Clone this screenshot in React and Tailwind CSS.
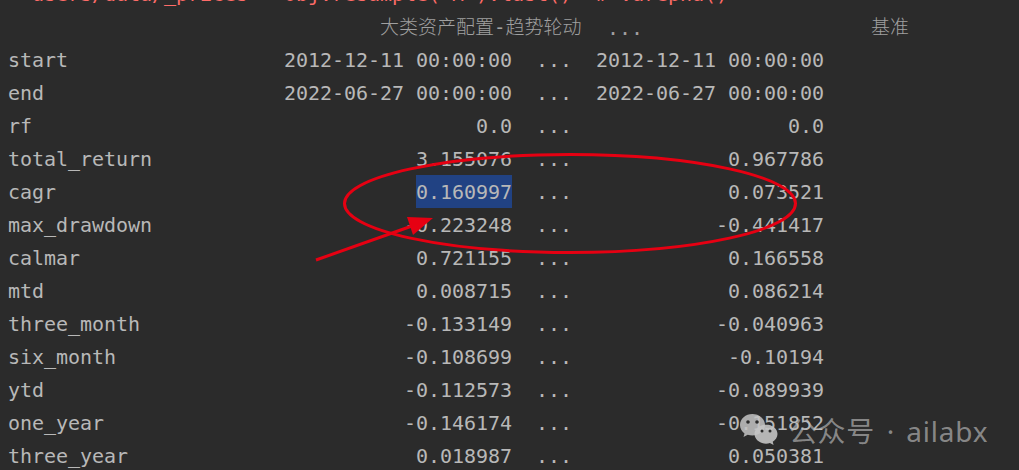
// Console output of a backtest stats table, with red annotations on top
const ROWS = [
  ['start', '2012-12-11 00:00:00', '2012-12-11 00:00:00'],
  ['end', '2022-06-27 00:00:00', '2022-06-27 00:00:00'],
  ['rf', '0.0', '0.0'],
  ['total_return', '3.155076', '0.967786'],
  ['cagr', '0.160997', '0.073521'],
  ['max_drawdown', '-0.223248', '-0.441417'],
  ['calmar', '0.721155', '0.166558'],
  ['mtd', '0.008715', '0.086214'],
  ['three_month', '-0.133149', '-0.040963'],
  ['six_month', '-0.108699', '-0.10194'],
  ['ytd', '-0.112573', '-0.089939'],
  ['one_year', '-0.146174', '-0.151852'],
  ['three_year', '0.018987', '0.050381'],
]

const Row = ({ label, left, right }) => (
  <div className="flex h-[33px] items-center whitespace-pre">
    <span className="w-[264px] shrink-0">{label}</span>
    <span className="flex h-full w-[240px] shrink-0 items-center justify-end">
      {/* the selected cell in the console */}
      <span className={label === 'cagr' ? 'flex h-full items-center bg-[#214283]' : ''}>{left}</span>
    </span>
    <span className="ml-6 w-9 shrink-0">...</span>
    <span className="ml-6 w-[228px] shrink-0 text-right">{right}</span>
  </div>
)

const Annotations = () => (
  <svg className="absolute left-0 top-0" width="1019" height="470" fill="none">
    <ellipse cx="570" cy="203.5" rx="225.5" ry="49" stroke="#e60012" strokeWidth="3" />
    <line x1="316" y1="260" x2="412" y2="226" stroke="#e60012" strokeWidth="3" />
    <polygon points="407,217 433,218 413,235" fill="#e60012" />
  </svg>
)

const Watermark = () => (
  <div className="absolute left-[740px] top-[412px] flex items-center">
    <svg width="40" height="32" viewBox="0 0 40 32">
      <path d="M12.5 0C5.6 0 0 4.9 0 11c0 3.4 1.8 6.4 4.5 8.4L3.5 23l4.2-2.2c1.5.4 3.1.7 4.8.7 6.9 0 12.5-4.7 12.5-10.5S19.4 0 12.5 0z" fill="#c4c4c4" fillOpacity="0.85" />
      <path d="M26 10.500c-6.300 0-11.500 4.300-11.500 9.600s5.200 9.600 11.500 9.600c1.400 0 2.700-.2 3.900-.6l3.700 2-.9-3.300c2.800-1.700 4.800-4.500 4.800-7.700 0-5.300-5.200-9.600-11.500-9.600z" fill="#c4c4c4" fillOpacity="0.9" />
      <circle cx="8" cy="8" r="1.800" fill="#2b2b2b" />
      <circle cx="17" cy="8" r="1.800" fill="#2b2b2b" />
      <circle cx="22" cy="17" r="1.500" fill="#2b2b2b" />
      <circle cx="30" cy="17" r="1.500" fill="#2b2b2b" />
    </svg>
    <div className="ml-[9px] mt-[2px] flex items-center whitespace-pre font-['Noto_Sans','Noto_Sans_CJK_SC',sans-serif] text-[28px] leading-[34px] text-[#bdbdbd]/65">
      <span className="tracking-[0.6px]">公众号</span>
      <span className="mx-3">·</span>
      <span className="tracking-[0.8px]">ailabx</span>
    </div>
  </div>
)

export default function App() {
  return (
    <div className="relative h-[470px] w-[1019px] overflow-hidden bg-[#2b2b2b] pl-2 font-['DejaVu_Sans_Mono','Noto_Sans_CJK_SC',monospace] text-[20px] tracking-[-0.04px] text-[#b8b8b8]">
      {/* stderr line, scrolled mostly out of view */}
      <div className="-mt-[23px] flex h-[34px] items-center whitespace-pre pl-6 text-[#ff6b68]">
        users/data/_prices = obj.resample('M').last()  # varepha()
      </div>

      {/* header row */}
      <div className="flex h-[32px] items-center whitespace-pre pt-px text-[19px] font-light tracking-normal text-[#a0a0a0]">
        <span className="ml-[372px] w-[227px] shrink-0">大类资产配置-趋势轮动</span>
        <span className="w-[264px] shrink-0 text-[20px]">...</span>
        <span>基准</span>
      </div>

      {ROWS.map(([label, left, right]) => (
        <Row key={label} label={label} left={left} right={right} />
      ))}

      <Annotations />
      <Watermark />
    </div>
  )
}
